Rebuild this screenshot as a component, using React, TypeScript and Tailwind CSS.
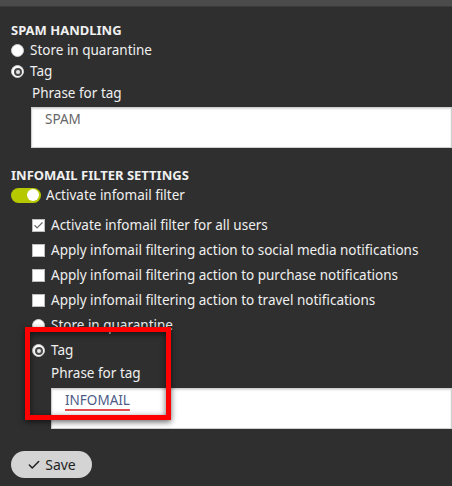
import { Check } from 'lucide-react'

const font = { fontFamily: '"Noto Sans", "Open Sans", sans-serif' }

function Radio({ checked }: { checked?: boolean }) {
    return (
        <span className="w-[13px] h-[13px] rounded-full bg-white border border-[#cfcfcf] flex items-center justify-center shrink-0">
            {checked && <span className="w-[8px] h-[8px] rounded-full border-[2px] border-[#4a4a4a] bg-[#e8e8e8]" />}
        </span>
    )
}

function Box({ checked }: { checked?: boolean }) {
    return (
        <span className="w-[13px] h-[13px] bg-white border border-[#bdbdbd] flex items-center justify-center shrink-0">
            {checked && <Check className="w-[11px] h-[11px] text-[#666]" strokeWidth={2.5} />}
        </span>
    )
}

const checks = [
    { label: 'Activate infomail filter for all users', checked: true },
    { label: 'Apply infomail filtering action to social media notifications' },
    { label: 'Apply infomail filtering action to purchase notifications' },
    { label: 'Apply infomail filtering action to travel notifications' },
]

export default function App() {
    return (
        <div className="w-[452px] h-[486px] bg-[#2f2f2f] text-[#f0f0f0] text-[13.5px] relative overflow-hidden" style={font}>
            <div className="h-[6px] bg-[#4b4b4b] border-b border-[#3a3a3a] box-content" />

            <div className="pl-[11px] pt-[13px] flex flex-col">
                <h2 className="h-[20px] leading-[20px] font-bold uppercase text-[13px]">Spam handling</h2>
                <label className="h-[21px] flex items-center gap-[6px]">
                    <Radio /> Store in quarantine
                </label>
                <label className="h-[21px] flex items-center gap-[6px]">
                    <Radio checked /> Tag
                </label>
                <div className="ml-[21px] mt-[1px] h-[20px] leading-[20px]">Phrase for tag</div>
                <div className="ml-[20px] mt-[4px] h-[41px] bg-white border border-[#cfcfcf] shadow-[inset_0_1px_2px_rgba(0,0,0,0.15)] px-[13px] pt-[1px] text-[#666]">
                    SPAM
                </div>

                <h2 className="mt-[17px] h-[20px] leading-[20px] font-bold uppercase text-[13px]">Infomail filter settings</h2>
                <label className="h-[20px] flex items-center gap-[5px]">
                    <span className="w-[30px] h-[15px] rounded-full bg-[#b5c800] flex items-center justify-end pr-[2px]">
                        <span className="w-[12px] h-[12px] rounded-full bg-white" />
                    </span>
                    Activate infomail filter
                </label>

                <div className="ml-[21px] mt-[8px] flex flex-col">
                    {checks.map((c, i) => (
                        <label key={i} className="h-[25px] flex items-center gap-[6px]">
                            <Box checked={c.checked} /> {c.label}
                        </label>
                    ))}
                    <label className="h-[25px] flex items-center gap-[6px]">
                        <Radio /> Store in quarantine
                    </label>
                    <label className="h-[25px] flex items-center gap-[6px]">
                        <Radio checked /> Tag
                    </label>
                    <div className="ml-[19px] h-[20px] leading-[20px]">Phrase for tag</div>
                    <div className="ml-[19px] mt-[5px] h-[41px] bg-white border border-[#cfcfcf] shadow-[inset_0_1px_2px_rgba(0,0,0,0.15)] px-[13px] pt-[1px] text-[#4d5b86]">
                        <span className="underline decoration-[#e05050] decoration-2 underline-offset-[4px]">INFOMAIL</span>
                    </div>
                </div>

                <button className="mt-[22px] w-[81px] h-[27px] rounded-full bg-[#d4d4d4] text-[#1f1f1f] text-[14px] flex items-center justify-center gap-[4px]">
                    <Check className="w-[14px] h-[14px]" strokeWidth={2.5} /> Save
                </button>
            </div>

            <div className="absolute left-[25px] top-[327px] w-[146px] h-[93px] border-[5px] border-[#ff0000] shadow-[0_2px_6px_rgba(0,0,0,0.6),inset_0_2px_6px_rgba(0,0,0,0.6)]" />
        </div>
    )
}
